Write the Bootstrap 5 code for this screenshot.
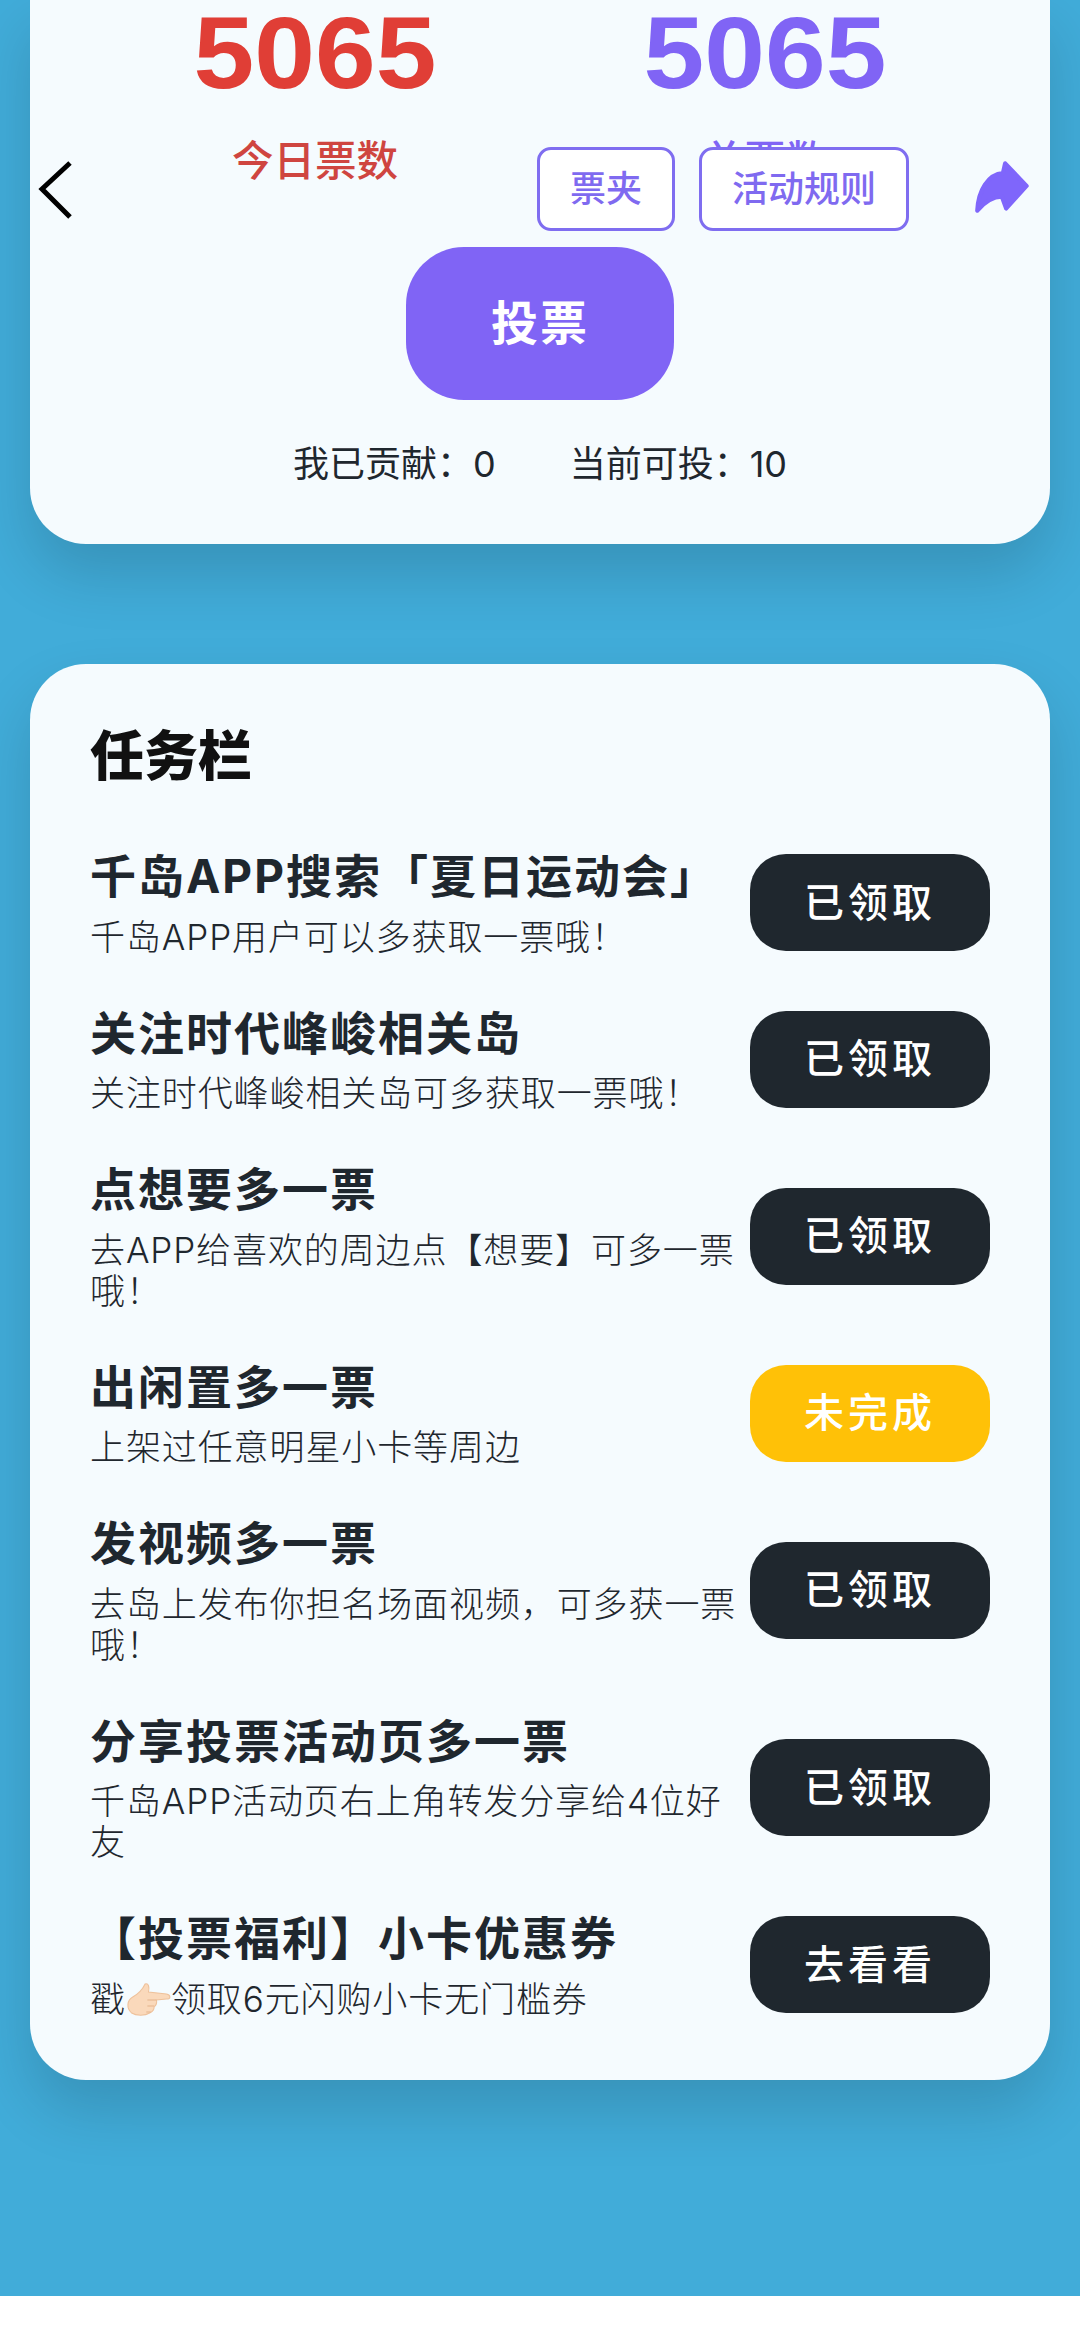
<!DOCTYPE html>
<html lang="zh-CN">
<head>
    <meta charset="UTF-8">
    <meta name="viewport" content="width=device-width, initial-scale=1.0">
    <title>投票</title>
    <link href="https://cdn.jsdelivr.net/npm/bootstrap@5.3.0/dist/css/bootstrap.min.css" rel="stylesheet">
    <style>
        body { background-color: #fff; font-family: Inter, "Noto Sans CJK SC", sans-serif; color: #1f272e; }
        .page-bg { background-color: #41acd9; height: 2296px; padding: 0 30px; position: relative; overflow: hidden; }
        .panel { background-color: #f5fbfe; border: 0; border-radius: 0; box-shadow: 0 30px 60px rgba(0,0,0,.15); }
        .vote-panel { border-bottom-left-radius: 56px; border-bottom-right-radius: 56px; padding: 0 60px 55px; height: 544px; }
        .big-num { font-family: "Liberation Sans", Arial, sans-serif; font-weight: 700; font-size: 102px; line-height: 118px; margin-top: -6px; transform: scaleX(1.07); }
        .num-red { color: #e03e36; }
        .num-purple { color: #8064f5; }
        .num-label { font-size: 41.5px; line-height: 60px; margin-top: 19px; font-weight: 500; }
        .label-red { color: #cf4540; }
        .vote-btn { width: 268px; height: 153px; border-radius: 58px; background-color: #8064f5; color: #fff; font-size: 47px; font-weight: 700; letter-spacing: 2px; margin-top: 56px; border: 0; }
        .vote-btn:hover { background-color: #8064f5; color: #fff; }
        .stat-line { font-size: 36px; line-height: 50px; margin-top: 39px; gap: 74px; }
        .top-tools { position: absolute; top: 147px; left: 0; right: 0; height: 84px; }
        .back-icon { position: absolute; left: 38px; top: 13px; }
        .share-icon { position: absolute; left: 973px; top: 11px; }
        .tool-btn { position: absolute; top: 0; height: 84px; background-color: #fff; border: 3px solid #7f6df0; border-radius: 14px; color: #7f6af0; font-size: 36px; font-weight: 500; padding: 0; line-height: 1; }
        .tool-a { left: 537px; width: 138px; }
        .tool-b { left: 699px; width: 210px; }
        .task-panel { margin-top: 120px; border-radius: 56px; height: 1416px; padding: 58px 60px 0 60px; }
        .task-heading { font-size: 54px; line-height: 70px; font-weight: 900; color: #111; margin: 0 0 56px; }
        .task-list { gap: 47px; }
        .task-name { font-size: 46px; line-height: 56px; font-weight: 700; letter-spacing: 2px; white-space: nowrap; margin-bottom: 12.5px; }
        .task-desc { font-size: 35px; line-height: 41px; letter-spacing: .9px; font-weight: 300; }
        .task-btn { flex: 0 0 240px; height: 97px; border-radius: 36px; font-size: 40px; font-weight: 500; letter-spacing: 4px; border: 0; padding: 0; color: #fff; }
        .task-dark { background-color: #1f272e; }
        .task-yellow { background-color: #ffc107; }
        .point-hand { width: 45px; height: 36px; vertical-align: -6px; }
    </style>
</head>
<body>
    <div class="page-bg">
        <!-- Vote summary -->
        <div class="card panel vote-panel">
            <div class="row g-0 text-center">
                <div class="col-6">
                    <div class="big-num num-red">5065</div>
                    <div class="num-label label-red">今日票数</div>
                </div>
                <div class="col-6">
                    <div class="big-num num-purple">5065</div>
                    <div class="num-label num-purple">总票数</div>
                </div>
            </div>
            <div class="text-center">
                <button class="btn vote-btn" type="button">投票</button>
            </div>
            <div class="d-flex justify-content-center stat-line">
                <span>我已贡献：0</span>
                <span>当前可投：10</span>
            </div>
        </div>

        <!-- Floating header -->
        <div class="top-tools">
            <svg class="back-icon" width="36" height="60" viewBox="0 0 36 60"><polyline points="32,3 4,29 32,57" fill="none" stroke="#000" stroke-width="5"/></svg>
            <button class="btn tool-btn tool-a" type="button">票夹</button>
            <button class="btn tool-btn tool-b" type="button">活动规则</button>
            <svg class="share-icon" width="60" height="58" viewBox="0 0 56 54"><path d="M30 5 L50 26 L31 47 L27 36 C17 36 10 42 4 49 C5 30 14 15 28 14 Z" fill="#7f66fb" stroke="#7f66fb" stroke-width="4" stroke-linejoin="round"/></svg>
        </div>

        <!-- Tasks -->
        <div class="card panel task-panel">
            <h2 class="task-heading">任务栏</h2>
            <div class="d-flex flex-column task-list">
                <div class="d-flex align-items-center justify-content-between">
                    <div>
                        <div class="task-name">千岛APP搜索「夏日运动会」</div>
                        <div class="task-desc">千岛APP用户可以多获取一票哦！</div>
                    </div>
                    <button class="btn task-btn task-dark" type="button">已领取</button>
                </div>
                <div class="d-flex align-items-center justify-content-between">
                    <div>
                        <div class="task-name">关注时代峰峻相关岛</div>
                        <div class="task-desc">关注时代峰峻相关岛可多获取一票哦！</div>
                    </div>
                    <button class="btn task-btn task-dark" type="button">已领取</button>
                </div>
                <div class="d-flex align-items-center justify-content-between">
                    <div class="flex-grow-1 me-2">
                        <div class="task-name">点想要多一票</div>
                        <div class="task-desc">去APP给喜欢的周边点【想要】可多一票哦！</div>
                    </div>
                    <button class="btn task-btn task-dark" type="button">已领取</button>
                </div>
                <div class="d-flex align-items-center justify-content-between">
                    <div>
                        <div class="task-name">出闲置多一票</div>
                        <div class="task-desc">上架过任意明星小卡等周边</div>
                    </div>
                    <button class="btn task-btn task-yellow" type="button">未完成</button>
                </div>
                <div class="d-flex align-items-center justify-content-between">
                    <div class="flex-grow-1 me-2">
                        <div class="task-name">发视频多一票</div>
                        <div class="task-desc">去岛上发布你担名场面视频，可多获一票哦！</div>
                    </div>
                    <button class="btn task-btn task-dark" type="button">已领取</button>
                </div>
                <div class="d-flex align-items-center justify-content-between">
                    <div class="flex-grow-1 me-2">
                        <div class="task-name">分享投票活动页多一票</div>
                        <div class="task-desc">千岛APP活动页右上角转发分享给4位好友</div>
                    </div>
                    <button class="btn task-btn task-dark" type="button">已领取</button>
                </div>
                <div class="d-flex align-items-center justify-content-between">
                    <div>
                        <div class="task-name">【投票福利】小卡优惠券</div>
                        <div class="task-desc">戳<svg class="point-hand" viewBox="0 0 40 36" preserveAspectRatio="none" role="img" aria-label="👉🏻"><path d="M17 2 C20 1 21 5 20 10 L36 12 C40 13 40 17 36 17 L27 18 C28 22 26 24 25 25 C25 29 23 30 21 31 C17 34 9 34 5 31 C0 26 1 18 6 15 C11 12 14 9 17 2 Z" fill="#fad9bb" stroke="#eec29c" stroke-width="1"/><path d="M19 18 H27 M19 24 H25 M18 30 H22" fill="none" stroke="#e3b48c" stroke-width="1"/></svg>领取6元闪购小卡无门槛券</div>
                    </div>
                    <button class="btn task-btn task-dark" type="button">去看看</button>
                </div>
            </div>
        </div>
    </div>
    <script src="https://cdn.jsdelivr.net/npm/bootstrap@5.3.0/dist/js/bootstrap.bundle.min.js"></script>
</body>
</html>
